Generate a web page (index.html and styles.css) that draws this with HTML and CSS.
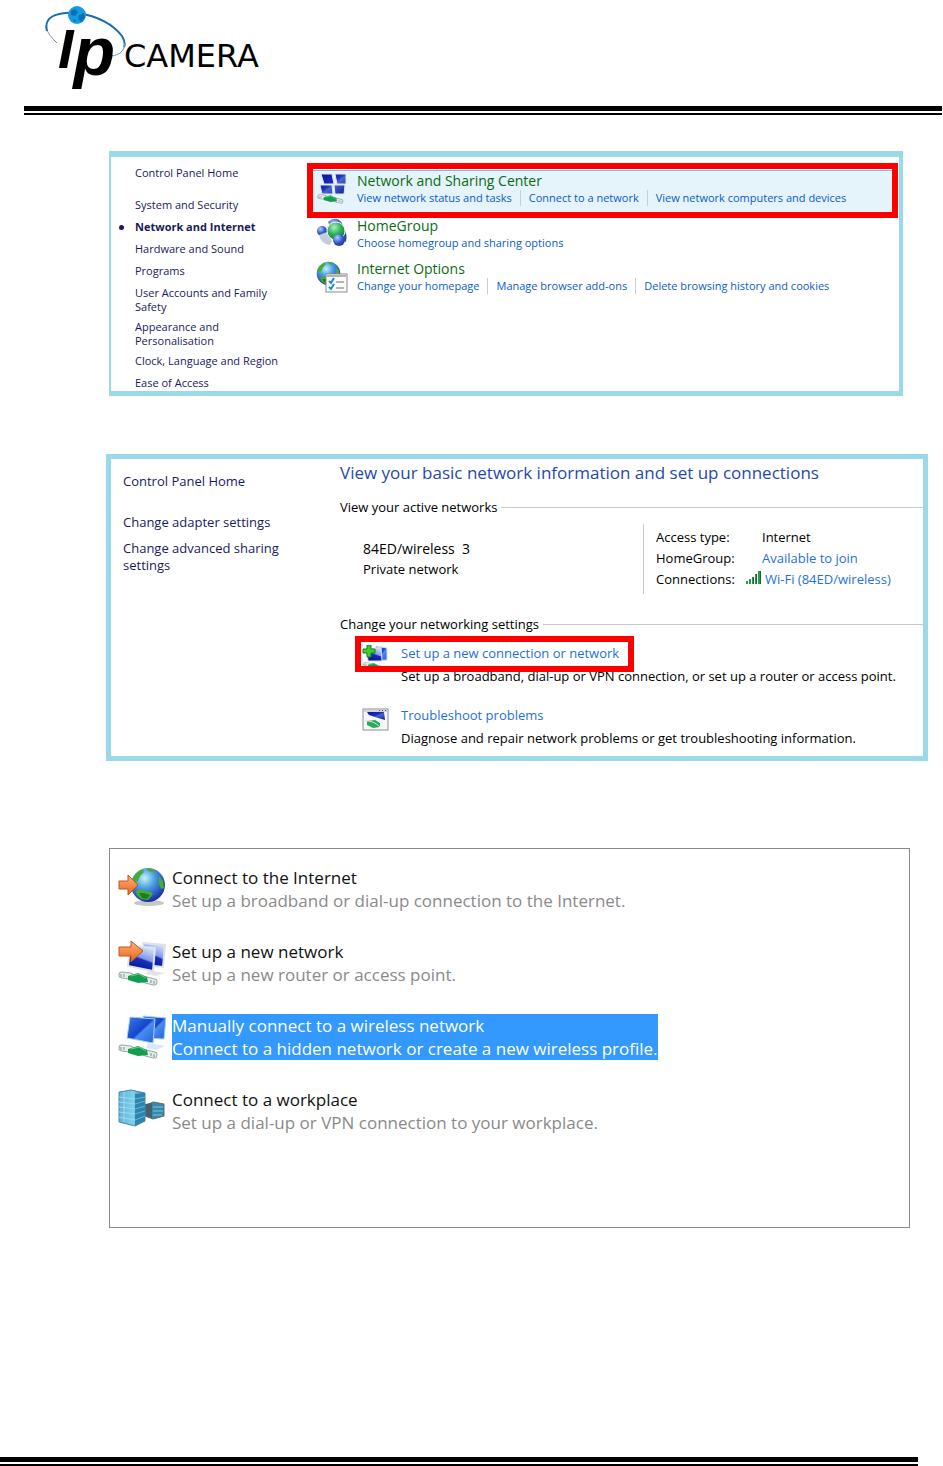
FILE: index.html
```html
<!DOCTYPE html>
<html lang="en">
<head>
<meta charset="utf-8">
<title>IP Camera</title>
<link rel="stylesheet" href="styles.css">
</head>
<body>
<svg class="defs" aria-hidden="true">
  <defs>
    <linearGradient id="screen" x1="0" y1="0" x2="1" y2="1">
      <stop offset="0" stop-color="#0410a0"/><stop offset=".45" stop-color="#1c30b8"/><stop offset=".55" stop-color="#4a64d0"/><stop offset="1" stop-color="#0a1c9c"/>
    </linearGradient>
    <linearGradient id="screenFront" x1="0.2" y1="1" x2="0.6" y2="0">
      <stop offset="0" stop-color="#00108c"/><stop offset=".5" stop-color="#1830bc"/><stop offset=".56" stop-color="#7f98e8"/><stop offset="1" stop-color="#d4e0fc"/>
    </linearGradient>
    <linearGradient id="screenBright" x1="0" y1="0" x2="1" y2="1">
      <stop offset="0" stop-color="#3a7cec"/><stop offset=".5" stop-color="#1444cc"/><stop offset=".56" stop-color="#4a8cf0"/><stop offset="1" stop-color="#2060dc"/>
    </linearGradient>
    <linearGradient id="arrow" x1="0" y1="0" x2="0" y2="1">
      <stop offset="0" stop-color="#ffb27a"/><stop offset="1" stop-color="#e8641c"/>
    </linearGradient>
    <linearGradient id="tower" x1="0" y1="0" x2="1" y2="0">
      <stop offset="0" stop-color="#5fb4d8"/><stop offset=".55" stop-color="#7fd0ec"/><stop offset="1" stop-color="#2c7ea6"/>
    </linearGradient>
    <radialGradient id="globe" cx=".4" cy=".3" r=".75">
      <stop offset="0" stop-color="#c4f0ff"/><stop offset=".4" stop-color="#489fe0"/><stop offset="1" stop-color="#1420a0"/>
    </radialGradient>
    <radialGradient id="ballBlue" cx=".35" cy=".3" r=".8">
      <stop offset="0" stop-color="#b4d0ff"/><stop offset=".5" stop-color="#3c64cc"/><stop offset="1" stop-color="#142c88"/>
    </radialGradient>
    <radialGradient id="ballGreen" cx=".4" cy=".3" r=".8">
      <stop offset="0" stop-color="#a8f0b8"/><stop offset=".5" stop-color="#2cac54"/><stop offset="1" stop-color="#0c7430"/>
    </radialGradient>
    <symbol id="globe-ball" viewBox="0 0 36 36">
      <circle cx="18" cy="18" r="17" fill="url(#globe)"/>
      <path d="M2 14Q4 6 13 2l1 3-4 4-2 5-5 3zM17 1l8 2-3 2-4-1zM29 9l4 5 1 7-3 1-2-5zM6 24l5-2 4 2 6 1 2 2-5 6-7-1-4-4z" fill="#48ac2c"/>
      <path d="M9 26l5 0 6 2-3 4-5-1z" fill="#1c7c20"/>
    </symbol>
    <symbol id="cable" viewBox="0 0 42 15">
      <path d="M4 4l8 1M28 9l8 2" fill="none" stroke="#9aa8a8" stroke-width="7" stroke-linecap="round"/>
      <path d="M4 4l8 1M28 9l8 2" fill="none" stroke="#e6eeec" stroke-width="5" stroke-linecap="round"/>
      <path d="M10 5l10-3 9 4 1 5-10 1-10-3z" fill="#149c50"/>
      <path d="M13 5l8-2 7 4" fill="none" stroke="#60d48c"/>
      <path d="M3 3v3M6 3v3M33 9v3M36 10v3" stroke="#80908c"/>
    </symbol>
  </defs>
</svg>

<header class="page-head">
  <svg class="logo" viewBox="0 0 256 92" role="img" aria-label="IP Camera">
    <path d="M13 43Q4 35 2 27" fill="none" stroke="#8090a8" stroke-width="1"/>
    <path d="M3 31Q-2 11 34 13Q64 18 78 36Q82 43 80 47" fill="none" stroke="#1c6cb0" stroke-width="2"/>
    <path d="M81 43Q80 57 63 56" fill="none" stroke="#5c9ccc" stroke-width="1"/>
    <text class="logo-mark" x="14" y="68">I<tspan class="logo-p" dy="7">p</tspan></text>
    <circle cx="33" cy="15" r="9" fill="#159be0"/>
    <path d="M27 11l4-2 3 3-3 4-4-1zM35 15l5-2 1 5-4 4-3-3zM29 19l3 1-1 3" fill="#0a70b4"/>
    <text class="logo-word" x="80" y="67">CAMERA</text>
  </svg>
  <div class="double-rule"></div>
</header>

<main class="shots">
  <section class="panel panel-internet">
    <nav class="side side-small">
      <ul>
        <li class="home"><a href="#">Control Panel Home</a></li>
        <li><a href="#">System and Security</a></li>
        <li class="current"><a href="#">Network and Internet</a></li>
        <li><a href="#">Hardware and Sound</a></li>
        <li><a href="#">Programs</a></li>
        <li class="two-line"><a href="#">User Accounts and Family<br>Safety</a></li>
        <li class="two-line"><a href="#">Appearance and<br>Personalisation</a></li>
        <li><a href="#">Clock, Language and Region</a></li>
        <li><a href="#">Ease of Access</a></li>
      </ul>
    </nav>
    <div class="categories">
      <article class="category marked">
        <svg class="icon-32" viewBox="0 0 32 32" aria-hidden="true">
          <g fill="url(#screen)" stroke="#dfe4ee" stroke-width="1"><path d="M5 1h11l2 10H8zM19 1h11v10h-9zM4 12h12l1 9H6zM18 12h11l-1 9h-9z"/></g>
          <use href="#cable" x="1" y="21" width="28" height="10"/>
        </svg>
        <div class="category-text">
          <h2><a href="#">Network and Sharing Center</a></h2>
          <p class="tasks"><a href="#">View network status and tasks</a><a href="#">Connect to a network</a><a href="#">View network computers and devices</a></p>
        </div>
      </article>
      <article class="category">
        <svg class="icon-32" viewBox="0 0 32 32" aria-hidden="true">
          <path d="M12 4q8-7 14 1l1 8-6 3-6-6z" fill="url(#ballBlue)"/>
          <circle cx="6" cy="13" r="5" fill="url(#ballBlue)"/>
          <path d="M3 17l8-3 5 9-2 4q-9-1-11-10z" fill="#c3ccd8"/>
          <path d="M27 10q5 6 3 14l-5-3z" fill="#34509c"/>
          <circle cx="20" cy="13" r="9" fill="url(#ballGreen)" stroke="#eef6f0"/>
          <circle cx="23" cy="22" r="6" fill="url(#ballBlue)"/>
        </svg>
        <div class="category-text">
          <h2><a href="#">HomeGroup</a></h2>
          <p class="tasks"><a href="#">Choose homegroup and sharing options</a></p>
        </div>
      </article>
      <article class="category">
        <svg class="icon-32" viewBox="0 0 32 32" aria-hidden="true">
          <use href="#globe-ball" x="0" y="0" width="25" height="25"/>
          <rect x="10" y="13" width="21" height="18" fill="#fafafa" stroke="#8c8c8c"/>
          <path d="M11 15h19" stroke="#b4b4b4" stroke-width="2"/>
          <path d="M13 20l2 2 3-5M13 26l2 2 3-5" fill="none" stroke="#1c8cc8" stroke-width="2"/>
          <path d="M20 21h8M20 27h8" stroke="#707070"/>
        </svg>
        <div class="category-text">
          <h2><a href="#">Internet Options</a></h2>
          <p class="tasks"><a href="#">Change your homepage</a><a href="#">Manage browser add-ons</a><a href="#">Delete browsing history and cookies</a></p>
        </div>
      </article>
    </div>
  </section>

  <section class="panel panel-network">
    <nav class="side side-medium">
      <ul>
        <li class="home"><a href="#">Control Panel Home</a></li>
        <li><a href="#">Change adapter settings</a></li>
        <li><a href="#">Change advanced sharing<br>settings</a></li>
      </ul>
    </nav>
    <div class="network-main">
      <h1>View your basic network information and set up connections</h1>
      <h2 class="ruled">View your active networks</h2>
      <div class="active-network">
        <div class="network-id">
          <p class="network-name">84ED/wireless&nbsp; 3</p>
          <p>Private network</p>
        </div>
        <dl class="facts">
          <dt>Access type:</dt><dd>Internet</dd>
          <dt>HomeGroup:</dt><dd><a href="#">Available to join</a></dd>
          <dt>Connections:</dt>
          <dd class="with-signal">
            <svg class="signal" viewBox="0 0 17 14" aria-hidden="true"><path d="M1 10h2v3H1zM4 8h2v5H4zM7 6h2v7H7zM10 3h2v10h-2zM13 0h3v13h-3z" fill="#2f9850"/><path d="M15 0h1v13h-1zM11 3h1v10h-1zM8 6h1v7H8z" fill="#17692f"/></svg>
            <a href="#">Wi-Fi (84ED/wireless)</a>
          </dd>
        </dl>
      </div>
      <h2 class="ruled">Change your networking settings</h2>
      <ul class="settings">
        <li class="setting boxed">
          <svg class="icon-27" viewBox="0 0 27 27" aria-hidden="true">
            <path d="M14 1l11 2v12l-11 1z" fill="url(#screenBright)" stroke="#dcdfe6"/>
            <path d="M5 5l14-3 1 14H6z" fill="url(#screenFront)" stroke="#dcdfe6"/>
            <use href="#cable" x="0" y="17" width="24" height="8"/>
            <path d="M5 0h4v4h4v4H9v4H5V8H1V4h4z" fill="#40cc30" stroke="#13801a"/>
          </svg>
          <div>
            <h3><a href="#">Set up a new connection or network</a></h3>
            <p>Set up a broadband, dial-up or VPN connection, or set up a router or access point.</p>
          </div>
        </li>
        <li class="setting">
          <svg class="icon-27" viewBox="0 0 27 27" aria-hidden="true">
            <rect x="1" y="2" width="25" height="21" fill="#f6f7f8" stroke="#8b9095"/>
            <path d="M2 3h23v2H2z" fill="#d1d5d9"/><path d="M17 3h1v1h-1zM20 3h1v1h-1zM23 3h1v1h-1z" fill="#555"/>
            <path d="M5 5h17l1 8-7-2-9-3z" fill="url(#screen)"/>
            <path d="M5 14l8-1 5 3v4l-7 1-6-3z" fill="#2ba95c"/><path d="M3 14q8-1 15 6" fill="none" stroke="#d7e9df"/>
          </svg>
          <div>
            <h3><a href="#">Troubleshoot problems</a></h3>
            <p>Diagnose and repair network problems or get troubleshooting information.</p>
          </div>
        </li>
      </ul>
    </div>
  </section>

  <section class="panel-options">
    <button class="option" type="button">
      <svg class="icon-48" viewBox="0 0 48 48" aria-hidden="true">
        <ellipse cx="31" cy="37" rx="15" ry="3" fill="#c4c8c8"/>
        <use href="#globe-ball" x="12" y="1" width="36" height="36"/>
        <path d="M1 15h9v-6l10 10-10 10v-6H1z" fill="url(#arrow)" stroke="#c05818"/>
      </svg>
      <span class="option-text"><span class="option-title">Connect to the Internet</span><span class="option-note">Set up a broadband or dial-up connection to the Internet.</span></span>
    </button>
    <button class="option" type="button">
      <svg class="icon-48" viewBox="0 0 48 48" aria-hidden="true">
        <path d="M25 3l22 2-2 22-18-2z" fill="url(#screenFront)" stroke="#dfe3e8" stroke-width="2"/>
        <path d="M12 6l25 2-2 23-25-5z" fill="url(#screenFront)" stroke="#dfe3e8" stroke-width="2"/>
        <path d="M30 31l5 0 12 2-9 3-10-2z" fill="#e2e5e8"/>
        <use href="#cable" x="0" y="31" width="42" height="15"/>
        <path d="M1 7h12V1l12 10-12 11v-6H1z" fill="url(#arrow)" stroke="#c05818"/>
      </svg>
      <span class="option-text"><span class="option-title">Set up a new network</span><span class="option-note">Set up a new router or access point.</span></span>
    </button>
    <button class="option selected" type="button">
      <svg class="icon-48" viewBox="0 0 48 48" aria-hidden="true">
        <path d="M25 2l23 2-2 21-18-1z" fill="url(#screenBright)" stroke="#a8cff0" stroke-width="1"/>
        <path d="M12 3l25 2-2 24-26-5z" fill="url(#screenBright)" stroke="#a8cff0" stroke-width="1"/>
        <path d="M30 29l5 1 12 2-9 4-10-2z" fill="#d8e8f4"/>
        <use href="#cable" x="0" y="30" width="42" height="15"/>
      </svg>
      <span class="option-text"><span class="option-title">Manually connect to a wireless network</span><span class="option-note">Connect to a hidden network or create a new wireless profile.</span></span>
    </button>
    <button class="option" type="button">
      <svg class="icon-48" viewBox="0 0 48 48" aria-hidden="true">
        <path d="M27 18l8-4 11 2v12l-11 3-8-3z" fill="#3788aa" stroke="#566b74"/>
        <path d="M35 19h10M35 23h10M35 27h9" stroke="#79c8e2"/>
        <path d="M27 16l7-1v15l-7-2z" fill="#46606c"/>
        <path d="M1 4l12-2 14 3v28l-10 5-16-4z" fill="url(#tower)" stroke="#468caa"/>
        <path d="M17 6l10-1v28l-10 5z" fill="#2d85ad"/>
        <path d="M1 9l16 2M1 14l16 2M1 19l16 2M1 24l16 2M1 29l16 3M6 4v30" fill="none" stroke="#a0daf0"/>
        <path d="M17 11l10-2M17 16l10-3M17 21l10-3M17 26l10-3M17 32l10-4" fill="none" stroke="#62b4d4"/>
      </svg>
      <span class="option-text"><span class="option-title">Connect to a workplace</span><span class="option-note">Set up a dial-up or VPN connection to your workplace.</span></span>
    </button>
  </section>
</main>

<footer class="page-foot"><div class="double-rule"></div></footer>
</body>
</html>
```
FILE: styles.css
```css
*, *::before, *::after { box-sizing: border-box; }

body {
  margin: 0;
  min-height: 100vh;
  display: flex;
  flex-direction: column;
  background: #fff;
  color: #000;
  font-family: "Open Sans", "Noto Sans", sans-serif;
}

h1, h2, h3, p, ul, dl, dd { margin: 0; padding: 0; font-weight: 400; }
ul { list-style: none; }
a { color: inherit; text-decoration: none; }
a:hover { text-decoration: underline; }
svg { display: block; flex: none; }
.defs { position: absolute; width: 0; height: 0; }

/* Page header and footer */
.page-head { padding: 0 1px 0 24px; }
.logo { width: 256px; height: 92px; margin: 0 0 14px 20px; }
.logo-mark { font-family: "Liberation Sans", sans-serif; font-size: 56px; font-weight: 700; font-style: italic; }
.logo-p { font-size: 68px; }
.logo-word { font-family: "DejaVu Sans", sans-serif; font-size: 32px; }
.double-rule { height: 9px; border-top: 5px solid #000; border-bottom: 2px solid #000; }
.page-foot { margin-top: auto; padding-right: 25px; }

.shots { padding: 36px 15px 0 106px; }

/* Network and Internet panel */
.panel { display: grid; border: 5px solid #9ad9e8; }
.panel-internet {
  grid-template-columns: 196px 1fr;
  margin: 0 25px 0 3px;
  border-width: 6px 4px 5px 2px;
}
.side { color: #1a1a5e; }
.side-small { padding: 9px 0 1px 24px; font-size: 11px; line-height: 14px; }
.side-small li { margin-bottom: 8px; }
.side-small .home { margin-bottom: 18px; }
.side-small .two-line { margin-bottom: 6px; }
.side-small li:last-child { margin-bottom: 0; }
.current { position: relative; font-weight: 700; }
.current::before {
  content: "";
  position: absolute;
  left: -16px;
  top: 5px;
  width: 5px;
  height: 5px;
  border-radius: 50%;
  background: #1a1a5e;
}
.categories { padding: 6px 1px 0 0; }
.category { display: flex; gap: 9px; padding: 0 9px; margin-bottom: 10px; }
.category.marked {
  margin-bottom: 0;
  border: 6px solid #f00;
  padding: 4px 3px 6px;
  background: linear-gradient(#fff 1px, #78bfe6 1px, #78bfe6 2px, #e5f3fb 2px);
}
.icon-32 { width: 32px; height: 32px; }
.category h2 { font-size: 14px; line-height: 16px; color: #0b6b12; margin-bottom: 1px; }
.tasks { display: flex; font-size: 11px; line-height: 16px; color: #0a5ccc; }
.tasks a + a { margin-left: 8px; padding-left: 8px; border-left: 1px solid #ccc; }

/* Network and Sharing Center panel */
.panel-network { grid-template-columns: 229px 1fr; margin-top: 58px; }
.side-medium { padding: 14px 0 0 12px; font-size: 13px; line-height: 17px; }
.side-medium li { margin-bottom: 9px; }
.side-medium .home { margin-bottom: 24px; }
.network-main { font-size: 13px; line-height: 17px; padding: 1px 0 9px; }
.network-main h1 { font-size: 17px; line-height: 25px; color: #1f4aa8; margin-bottom: 14px; }
.ruled { display: flex; align-items: center; gap: 4px; font-size: 13px; line-height: 17px; }
.ruled::after { content: ""; flex: 1; height: 1px; background: #c8c8c8; }
.active-network { display: grid; grid-template-columns: 303px 1fr; margin: 8px 0 22px; }
.network-id { padding: 16px 0 0 23px; }
.network-name { font-size: 14px; margin-bottom: 4px; }
.facts {
  display: grid;
  grid-template-columns: 106px 1fr;
  row-gap: 4px;
  padding: 5px 0 6px 12px;
  border-left: 1px solid #c8c8c8;
}
.facts a, .setting h3 { color: #1f70dd; }
.with-signal { display: flex; gap: 3px; margin-left: -17px; }
.signal { width: 17px; height: 14px; }
.settings { display: grid; gap: 22px; padding: 12px 0 0 22px; }
.setting { position: relative; display: flex; gap: 12px; }
.setting h3 { font-size: 13px; line-height: 17px; margin-bottom: 6px; }
.icon-27 { width: 27px; height: 27px; }
.boxed::after {
  content: "";
  position: absolute;
  left: -7px;
  top: -9px;
  width: 279px;
  height: 36px;
  border: 6px solid #f00;
}

/* Connection options panel */
.panel-options {
  display: flex;
  flex-direction: column;
  gap: 26px;
  min-height: 380px;
  margin: 87px 18px 0 3px;
  padding: 17px 8px;
  border: 1px solid #888a92;
}
.option {
  display: flex;
  align-items: flex-start;
  gap: 6px;
  padding: 0;
  border: 0;
  background: none;
  font: inherit;
  font-size: 17px;
  line-height: 23px;
  text-align: left;
  color: #111;
}
.icon-48 { width: 48px; height: 48px; }
.option-text { display: flex; flex-direction: column; }
.option-note { color: #8a8a8a; }
.selected .option-text { background: #39f; }
.selected .option-text, .selected .option-note { color: #fff; }
```
